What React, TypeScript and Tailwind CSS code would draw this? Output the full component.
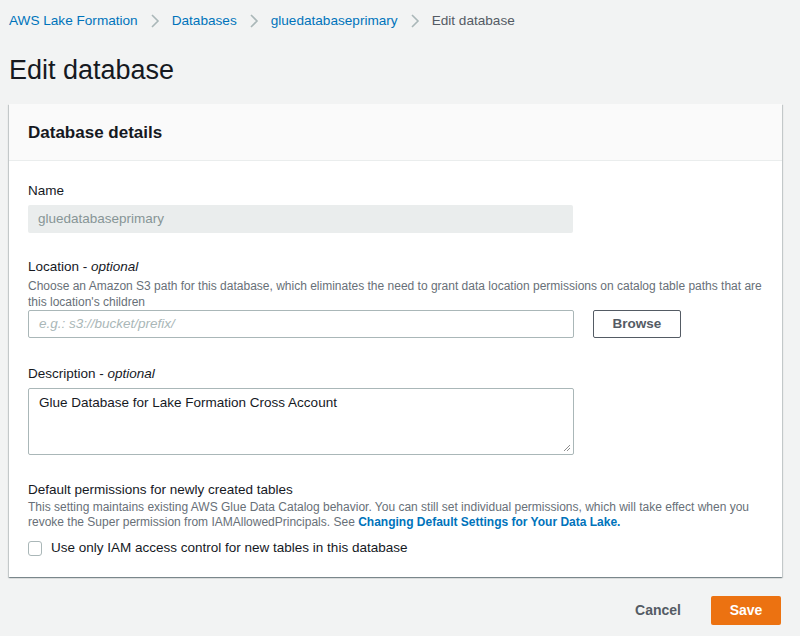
import React from "react";

function Chevron() {
  return (
    <svg width="10" height="16" viewBox="0 0 10 16" className="mx-3 text-[#aab7b8]">
      <path d="M2 2l6 6-6 6" fill="none" stroke="currentColor" strokeWidth="1.6" />
    </svg>
  );
}

export default function App() {
  return (
    <div className="h-[636px] w-[800px] overflow-hidden bg-[#f2f3f3] font-['Liberation_Sans',Arial,sans-serif] text-[#16191f]">
      {/* Breadcrumbs */}
      <nav className="flex h-[42px] items-center pl-[9px] text-[13.6px]">
        <a className="text-[#0073bb]">AWS Lake Formation</a>
        <Chevron />
        <a className="text-[#0073bb]">Databases</a>
        <Chevron />
        <a className="text-[#0073bb]">gluedatabaseprimary</a>
        <Chevron />
        <span className="text-[#545b64]">Edit database</span>
      </nav>

      <h1 className="pl-[9px] pt-[9px] text-[27px] leading-[38px] font-normal">Edit database</h1>

      {/* Card */}
      <div className="mx-[9px] mt-[15px] w-[773px] bg-white shadow-[0_1px_1px_0_rgba(0,28,36,0.3),1px_1px_1px_0_rgba(0,28,36,0.15),-1px_1px_1px_0_rgba(0,28,36,0.15)]">
        <div className="flex h-[57px] items-center border-b border-[#eaeded] bg-[#fafafa] px-[19px] pt-[2px]">
          <h2 className="text-[17px] font-bold">Database details</h2>
        </div>

        <div className="px-[19px] pb-[19px] pt-[21px]">
          {/* Name */}
          <label className="block text-[13.5px] leading-[18px]">Name</label>
          <div className="mt-[5px] flex h-[28px] w-[545px] items-center rounded-[2px] bg-[#eaeded] px-[10px] text-[13.5px] text-[#879596]">
            gluedatabaseprimary
          </div>

          {/* Location */}
          <div className="mt-[25px]">
            <label className="block text-[13.5px] leading-[18px]">
              Location - <i>optional</i>
            </label>
            <p className="mt-[2px] text-[12px] leading-[16px] text-[#687078]">
              Choose an Amazon S3 path for this database, which eliminates the need to grant data location permissions on catalog table paths that are this location's children
            </p>
            <div className="mt-0 flex items-center gap-[19px]">
              <div className="flex h-[28px] w-[546px] items-center rounded-[2px] border border-[#aab7b8] bg-white px-[10px] text-[13.5px] italic text-[#aab7b8]">
                e.g.: s3://bucket/prefix/
              </div>
              <button className="h-[28px] w-[88px] rounded-[2px] border border-[#545b64] bg-white text-[13.5px] font-bold text-[#545b64]">
                Browse
              </button>
            </div>
          </div>

          {/* Description */}
          <div className="mt-[27px]">
            <label className="block text-[13.5px] leading-[18px]">
              Description - <i>optional</i>
            </label>
            <div className="relative mt-[5px] h-[67px] w-[546px] rounded-[2px] border border-[#aab7b8] bg-white px-[10px] pt-[4px] text-[13.5px]">
              Glue Database for Lake Formation Cross Account
              <svg width="8" height="8" viewBox="0 0 8 8" className="absolute bottom-[2px] right-[2px]">
                <path d="M7 1L1 7M7 4L4 7" stroke="#8d8d8d" strokeWidth="1" />
              </svg>
            </div>
          </div>

          {/* Default permissions */}
          <div className="mt-[26px]">
            <label className="block text-[13.5px] leading-[18px]">Default permissions for newly created tables</label>
            <p className="mt-[1px] text-[12px] leading-[15px] text-[#687078]">
              This setting maintains existing AWS Glue Data Catalog behavior. You can still set individual permissions, which will take effect when you revoke the Super permission from IAMAllowedPrincipals. See{" "}
              <a className="font-bold text-[#0073bb]">Changing Default Settings for Your Data Lake.</a>
            </p>
            <div className="mt-[8px] flex items-center gap-[9px]">
              <span className="h-[15px] w-[14px] rounded-[3px] border border-[#aab7b8] bg-white" />
              <span className="text-[13.5px]">Use only IAM access control for new tables in this database</span>
            </div>
          </div>
        </div>
      </div>

      {/* Actions */}
      <div className="mr-[19px] mt-[19px] flex items-center justify-end gap-[30px]">
        <button className="text-[14px] font-bold text-[#545b64]">Cancel</button>
        <button className="h-[29px] w-[70px] rounded-[2px] bg-[#ec7211] text-[14px] font-bold text-white">Save</button>
      </div>
    </div>
  );
}
